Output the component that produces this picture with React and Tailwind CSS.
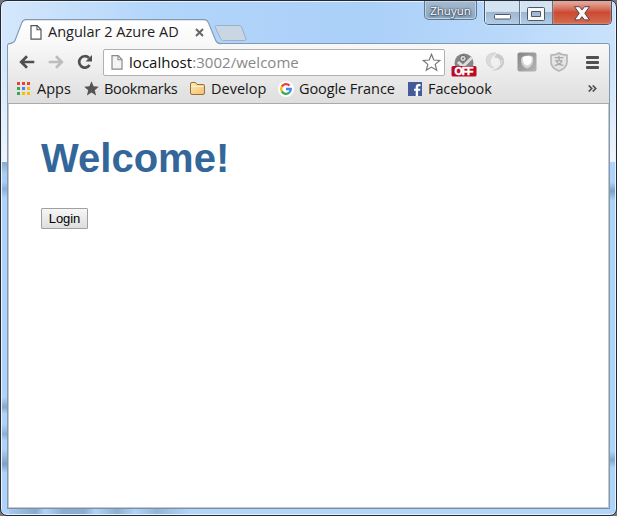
import React from "react";

const FONT = "font-['Open_Sans','Noto_Sans',sans-serif]";

function PageIcon({ className, fold }) {
  return (
    <svg className={className} width="12" height="15" viewBox="0 0 12 15" fill="none">
      <path d="M1 .7h6.2L11 4.6v9.6H1z" fill={fold ? "#f4f4f4" : "#fff"} stroke={fold ? "#8a8a8a" : "#555"} strokeWidth="1.2" />
      <path d="M7 .8v4h4" stroke={fold ? "#8a8a8a" : "#555"} strokeWidth="1.1" />
    </svg>
  );
}

function Back({ color, flip }) {
  return (
    <svg className={flip ? "-scale-x-100" : ""} width="16" height="14" viewBox="0 0 16 14" fill="none" stroke={color} strokeWidth="2.7">
      <path d="M2 7h13.3M8 1.3 2.2 7 8 12.7" />
    </svg>
  );
}

function Reload() {
  return (
    <svg width="16" height="16" viewBox="0 0 16 16">
      <path d="M12.6 11.1A5.7 5.7 0 1 1 12 4" fill="none" stroke="#505050" strokeWidth="2.7" />
      <path d="M15 1v6.5H8.6z" fill="#505050" />
    </svg>
  );
}

function TitleBar() {
  return (
    <div className="relative flex h-[42px] shrink-0 items-start">
      <svg className="absolute left-[6px] top-[18px]" width="245" height="26" viewBox="0 0 245 26">
        <defs>
          <linearGradient id="tab" x1="0" y1="0" x2="0" y2="1">
            <stop offset="0" stopColor="#fff" />
            <stop offset="1" stopColor="#f8f8f8" />
          </linearGradient>
        </defs>
        <path d="M1 25.5C5 24.5 7 24 8 21.5L14.7 4C15.7 1.4 16.6.6 19 .6h178c2.5 0 3.5.8 4.5 3.4L208.500 21c1.2 3 2.5 3.8 5.5 4.500z" fill="url(#tab)" />
        <path d="M1 25C5 24.3 7 24 8 21.5L14.7 4C15.7 1.4 16.6.6 19 .6h178c2.5 0 3.5.8 4.5 3.4L208.500 21c1.2 3 2.5 3.5 5.5 3.8" fill="none" stroke="#8299b1" strokeWidth="1.1" />
        <path d="M209.500 6.500h22.500c1.500 0 2.200.7 2.700 2l4 10.500c.6 1.600.1 2.500-1.500 2.500h-20.500c-1.600 0-2.600-.7-3.200-2.200L208.300 8.500c-.5-1.300 0-2 1.200-2z" fill="#c9d7e5" stroke="#9bb0c5" />
      </svg>
      <div className="relative ml-[29px] mt-[23px] flex h-4 w-[176px] items-center">
        <PageIcon />
        <span className="ml-[6px] whitespace-nowrap text-[14.5px] leading-4 text-[#222]">Angular 2 Azure AD</span>
        <svg className="ml-auto mr-[2px]" width="9" height="9" viewBox="0 0 9 9">
          <path d="m1 1 7 7M8 1 1 8" stroke="#646464" strokeWidth="1.9" />
        </svg>
      </div>
      <div className="ml-auto mr-[7px] flex h-[19px] w-[53px] justify-center rounded-b-[5px] border border-t-0 border-[#5f7894] bg-gradient-to-b from-[#a5bacf] to-[#8ea6bf] text-[11.5px] leading-[19px] text-white shadow-[inset_0_0_0_1px_#bed1e3] [text-shadow:0_0_2px_#36495e,0_0_2px_#36495e,0_1px_2px_#36495e]">
        Zhuyun
      </div>
      <div className="mr-[4px] flex h-6 w-[128px] overflow-hidden rounded-b-[5px] border border-t-0 border-[#45576d] shadow-[0_0_2px_#eaf5ff]">
        <div className="flex w-[35px] items-center justify-center border-r border-[#60758c] bg-gradient-to-b from-[#d4e3f2] from-45% via-[#9fb6d0] via-50% to-[#b2cde8] shadow-[inset_1px_0_0_#e0edf9]">
          <svg className="mt-[9px]" width="17" height="6"><rect x=".5" y=".5" width="16" height="4.5" rx="1" fill="#fff" stroke="#4d5969" /></svg>
        </div>
        <div className="flex w-[33px] items-center justify-center border-r border-[#60758c] bg-gradient-to-b from-[#d4e3f2] from-45% via-[#9fb6d0] via-50% to-[#b2cde8] shadow-[inset_1px_0_0_#e0edf9]">
          <svg className="mt-[2px]" width="18" height="14">
            <path d="M1.5.5h15q1 0 1 1v11q0 1-1 1h-15q-1 0-1-1v-11q0-1 1-1zM4.500 4.500v5h9v-5z" fill="#f8f8f8" fillRule="evenodd" stroke="#4d5969" />
          </svg>
        </div>
        <div className="flex flex-1 items-center justify-center bg-gradient-to-b from-[#e1a093] from-10% via-[#cb4a31] via-50% to-[#d36c50] shadow-[inset_0_0_2px_#f0b5a5]">
          <svg className="mt-[2px]" width="18" height="15" viewBox="0 0 18 15">
            <path d="M1.500.7h5L9 3.900 11.500.7h5l-4.700 6.600 4.700 6.600h-5L9 10.700l-2.500 3.200h-5l4.700-6.600z" fill="#f8f8f8" stroke="#5b4048" />
          </svg>
        </div>
      </div>
    </div>
  );
}

function Toolbar() {
  return (
    <div className="flex h-[36px] shrink-0 items-center pl-[11px] pr-[9px]">
      <Back color="#505050" />
      <div className="ml-[13px] flex"><Back color="#bdbdbd" flip /></div>
      <div className="ml-[13px]"><Reload /></div>
      <div className="ml-[10px] flex h-[27px] w-[342px] items-center rounded-[2px] border border-[#b1b1b1] bg-white pl-[7px] pr-[3px]">
        <PageIcon fold />
        <span className="ml-[6px] whitespace-nowrap text-[15px] leading-5 tracking-[0.04px] text-[#888]"><span className="text-[#111]">localhost</span>:3002/welcome</span>
        <svg className="ml-auto" width="19" height="19" viewBox="0 0 19 19">
          <path d="m9.500 1.300 2.300 5.700 6 .5-4.600 3.900 1.500 5.900-5.200-3.200-5.200 3.200 1.500-5.900-4.600-3.900 6-.5z" fill="#fff" stroke="#777" strokeWidth="1.200" />
        </svg>
      </div>
      <svg className="ml-[6px] mt-[5px]" width="26" height="24" viewBox="0 0 26 24">
        <circle cx="13" cy="10" r="9.500" fill="#858585" />
        <circle cx="12" cy="5.500" r="3.200" fill="#d5d5d5" stroke="#686868" />
        <circle cx="12" cy="5.500" r="1" fill="#777" />
        <path d="m7 9 5 4.500 9-9" fill="none" stroke="#dedede" strokeWidth="3" />
        <rect x=".5" y="13" width="25" height="10.500" rx="1.500" fill="#b90b23" />
        <text x="13" y="22" textAnchor="middle" fill="#fff" stroke="#fff" strokeWidth=".5" fontSize="10.500" fontWeight="bold" fontFamily="Liberation Sans, sans-serif" textLength="19">OFF</text>
      </svg>
      <svg className="ml-[8px]" width="20" height="20" viewBox="0 0 20 20">
        <path d="M11 1C5 0 0 4 1.500 10c1 4 4 6 7.500 6-3-2-4.500-5-3.500-8S8 4 11 1z" fill="#dadada" stroke="#cacaca" strokeWidth=".5" />
        <path d="M12 1.500c5 1 8 5 7 9.500-1 5-6 8-12 7.500 3-1 7-3 8-6.500s-1-6.500-6-6.500c1-2 2-3 3-4z" fill="#cbcbcb" />
        <path d="M17 8c0 4-3 7-7 9" fill="none" stroke="#e9e9e9" />
      </svg>
      <svg className="ml-[12px]" width="20" height="20" viewBox="0 0 20 20">
        <defs><linearGradient id="badge" x1="0" y1="0" x2="1" y2="1"><stop stopColor="#858585" /><stop offset="1" stopColor="#b7b7b7" /></linearGradient></defs>
        <rect x=".5" y=".5" width="19" height="19" rx="2" fill="url(#badge)" />
        <path d="M4.500 5.500C7 3.500 13 2.500 15.500 4.500c2 4 0 10-5 12C6 16 3 11 4.500 5.500z" fill="#d4d4d4" />
        <path d="M6 5c3-1.500 6-1.500 8.500 0 1 4-1 7.500-4 8.500C7 13 5 9 6 5z" fill="#fff" />
      </svg>
      <svg className="ml-[13px]" width="18" height="20" viewBox="0 0 18 20">
        <path d="M9 1c2 1.5 5 2 8 2v7c0 4-3 7-8 9-5-2-8-5-8-9V3c3 0 6-.5 8-2z" fill="#e5e5e5" stroke="#b5b5b5" strokeWidth="1.6" />
        <text x="9" y="13.300" textAnchor="middle" fontSize="10" fontWeight="bold" fill="#aaa" fontFamily="Noto Sans CJK SC, sans-serif">支</text>
      </svg>
      <div className="ml-auto mr-[1px] mt-px flex w-[13px] flex-col gap-[2px]">
        <i className="h-[3px] rounded-[1px] bg-[#505050]" /><i className="h-[3px] rounded-[1px] bg-[#505050]" /><i className="h-[3px] rounded-[1px] bg-[#505050]" />
      </div>
    </div>
  );
}

const DOTS = ["#e84335", "#e84335", "#e84335", "#35a853", "#4385f4", "#fbbc05", "#35a853", "#fbbc05", "#fbbc05"];

function BookmarkBar() {
  const label = "whitespace-nowrap text-[14.5px] leading-5 text-[#171717]";
  return (
    <div className="flex h-[24px] shrink-0 items-center border-b border-[#aaa] pb-[6px] pl-[9px] pr-[12px]">
      <div className="grid w-[13px] grid-cols-3 gap-[2px]">
        {DOTS.map((c, i) => <i key={i} className="size-[3px]" style={{ backgroundColor: c }} />)}
      </div>
      <span className={"ml-[7px] w-[34px] " + label}>Apps</span>
      <svg className="ml-[13px]" width="15" height="15" viewBox="0 0 15 15"><path d="m7.500.3 2.100 5 5.200.4-4 3.500 1.300 5.200-4.600-2.800-4.600 2.800 1.300-5.200-4-3.500 5.200-.4z" fill="#555" /></svg>
      <span className={"ml-[5px] w-[73px] tracking-[-0.35px] " + label}>Bookmarks</span>
      <svg className="ml-[13px]" width="15" height="13" viewBox="0 0 15 13">
        <defs><linearGradient id="folder" x1="0" y1="0" x2="1" y2="1"><stop stopColor="#ffe9b5" /><stop offset="1" stopColor="#f4bf6d" /></linearGradient></defs>
        <path d="M.5 2q0-1.500 1.500-1.500h3.500L7 2.500h6q1.500 0 1.500 1.500v7q0 1.500-1.500 1.500H2Q.5 12.500.5 11z" fill="url(#folder)" stroke="#94703d" />
        <path d="M1.500 4.500h12" stroke="#fff1cf" />
      </svg>
      <span className={"ml-[6px] w-[55px] " + label}>Develop</span>
      <svg className="ml-[12px]" width="16" height="16" viewBox="0 0 16 16">
        <circle cx="8" cy="8" r="8" fill="#fff" />
        <g fill="none" strokeWidth="2.300">
          <path d="M3.800 5.600A4.800 4.800 0 0 1 11.500 4.600" stroke="#ea4335" />
          <path d="M3.800 5.600a4.800 4.800 0 0 0 0 4.800" stroke="#fbbc05" />
          <path d="M3.800 10.400a4.800 4.800 0 0 0 7.500 1.100" stroke="#34a853" />
          <path d="M11.300 11.500A4.800 4.800 0 0 0 12.800 8H8" stroke="#4285f4" />
        </g>
      </svg>
      <span className={"ml-[5px] w-[96px] tracking-[-0.08px] " + label}>Google France</span>
      <svg className="ml-[13px]" width="14" height="14" viewBox="0 0 14 14">
        <rect width="14" height="14" fill="#435b9b" />
        <path d="M7.700 14V8.800H6V6.700h1.700V5.100c0-2 1.200-3 3-3h1.800v2.200h-1.300c-.8 0-1.100.4-1.100 1.100v1.300h2.300l-.3 2.100h-2V14z" fill="#fff" />
      </svg>
      <span className={"ml-[6px] w-[64px] tracking-[-0.1px] " + label}>Facebook</span>
      <svg className="ml-auto" width="9" height="7" viewBox="0 0 9 7" fill="none" stroke="#505050" strokeWidth="1.700"><path d="m.7.500 3 3-3 3M4.700.5l3 3-3 3" /></svg>
    </div>
  );
}

export default function App() {
  return (
    <div className="h-[516px] w-[617px] overflow-hidden bg-[#777]">
      <div className={"relative flex h-full flex-col overflow-hidden rounded-[7px] border border-[#242833] bg-[#b2d5fa] shadow-[inset_0_0_0_1px_#e6f3ff] " + FONT}>
        <div className="pointer-events-none absolute inset-x-px top-px h-[160px] bg-[linear-gradient(90deg,#d4e7fc_0%,#b2d5fa_26%,#abd0f8_60%,#bbdafb_85%,#cae2fb_100%)]" />
        <div className="pointer-events-none absolute inset-x-px top-[60px] h-[101px] bg-gradient-to-b from-transparent to-[#eef4fb]" />
        <div className="pointer-events-none absolute left-px top-[161px] h-[351px] w-[6px] bg-[linear-gradient(180deg,#8ca9c7_0,#a9cef5_12px,#a9cef5_20px,#8bafd9_27px,#afd4fb_36px,#afd4fb_235px,#87a8ca_245px,#afd4fb_252px,#afd4fb_262px,#8caed3_272px,#afd4fb_279px,#afd4fb_287px,#7f9fc3_302px,#afd4fb_311px)]" />
        <div className="pointer-events-none absolute right-px top-[161px] h-[351px] w-[6px] bg-[linear-gradient(180deg,#afd4fb_0,#afd4fb_20px,#7ca0c4_29px,#afd4fb_39px,#afd4fb_289px,#83a8ce_298px,#afd4fb_306px)]" />
        <div className="pointer-events-none absolute bottom-px left-[8px] h-[6px] w-[180px] bg-[linear-gradient(90deg,#a5c8ec,#87a9cf_15%,#aed3fa_20%,#8badd3_30%,#8badd3_42%,#aed3fa_48%,#8daecf_60%,#aed3fa_70%,#93b4d8_82%,#afd4fb)]" />
        <div className="relative flex min-h-0 flex-1 flex-col">
          <TitleBar />
          <div className="mx-[6px] mb-[6px] flex min-h-0 flex-1 flex-col rounded-t-[3px] border border-[#8299b1] border-b-[#7891a8] bg-white">
            <div className="flex shrink-0 flex-col rounded-t-[2px] bg-gradient-to-b from-[#f8f8f8] to-[#dedede]">
              <Toolbar />
              <BookmarkBar />
            </div>
            <main className="flex flex-1 flex-col items-start border-x border-b border-[#c8c8c8] pl-[32px] pt-[31px] font-['Liberation_Sans',Arial,sans-serif]">
              <h1 className="text-[40px] font-bold leading-[46px] text-[#336699]">Welcome!</h1>
              <button className="mt-[27px] h-[21px] w-[47px] rounded-[1px] border border-[#a0a0a0] bg-gradient-to-b from-[#f6f6f6] to-[#dedede] text-[13px] leading-[18px] tracking-[-0.1px] text-black">Login</button>
            </main>
          </div>
        </div>
      </div>
    </div>
  );
}
